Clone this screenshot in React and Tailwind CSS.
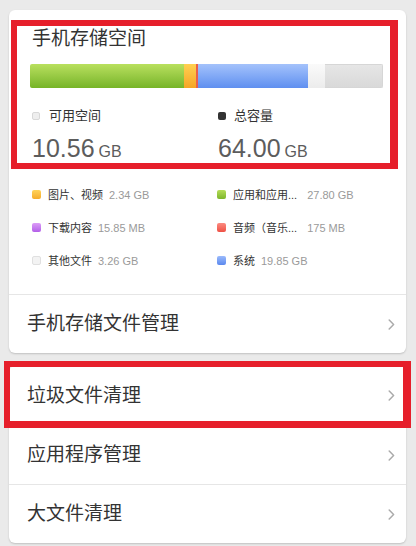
import React from "react";

const FONT = { fontFamily: '"Liberation Sans", "Noto Sans CJK SC", sans-serif' };

function Chevron() {
  return (
    <svg width="7" height="11" viewBox="0 0 7 11" className="shrink-0">
      <polyline points="1.2,1 5.6,5.5 1.2,10" fill="none" stroke="#ababab" strokeWidth="1.5" strokeLinecap="round" strokeLinejoin="round" />
    </svg>
  );
}

function Row({ label, border }) {
  return (
    <div className={`flex h-[59px] items-center justify-between pl-[18px] pr-[11px] ${border ? "border-t border-[#e6e6e6]" : ""}`}>
      <span className="text-[19px] leading-[22px] text-[#333]">{label}</span>
      <Chevron />
    </div>
  );
}

function Legend({ color, label, value, wide }) {
  return (
    <div className="flex h-[33px] items-center">
      <span className={`mr-[7px] h-[9px] w-[9px] shrink-0 rounded-[2px] ${color}`} />
      <span className="text-[11px] leading-[14px] text-[#333]">{label}</span>
      <span className={`${wide ? "ml-[10px]" : "ml-[6px]"} text-[11px] leading-[14px] text-[#9a9a9a]`}>{value}</span>
    </div>
  );
}

export default function App() {
  return (
    <div style={FONT} className="relative h-[546px] w-[416px] overflow-hidden bg-[#eaeaea] px-[9px] pt-[10px]">
      <div className="w-[397px] rounded-[6px] bg-white shadow-[0_1px_2px_rgba(0,0,0,0.18)]">
        <div className="pl-[23px] pr-[23px]">
          <div className="pt-[18px] text-[19px] leading-[22px] text-[#333]">手机存储空间</div>
          <div className="-ml-[2px] mt-[14px] flex h-[24px] w-[353px] overflow-hidden rounded-[2px]">
            <div className="w-[154px] bg-gradient-to-b from-[#b9e05e] to-[#76b426]" />
            <div className="w-[12px] bg-gradient-to-b from-[#ffd050] to-[#f5a524]" />
            <div className="w-[2px] bg-[#e8604a]" />
            <div className="w-[110px] bg-gradient-to-b from-[#a4c2fb] to-[#5f8ff0]" />
            <div className="w-[17px] bg-gradient-to-b from-[#fafafa] to-[#ececec]" />
            <div className="flex-1 border border-l-0 border-[#d6d6d6] bg-gradient-to-b from-[#e6e6e6] to-[#d9d9d9]" />
          </div>
          <div className="mt-[20px] grid grid-cols-[186px_1fr]">
            <div>
              <div className="flex h-[16px] items-center">
                <span className="mr-[9px] h-[8px] w-[8px] rounded-[2px] border border-[#d8d8d8] bg-[#eeeeee]" />
                <span className="text-[13px] leading-[16px] text-[#333]">可用空间</span>
              </div>
              <div className="mt-[10px] h-[28px] leading-[28px] text-[#5c5c5c]">
                <span className="text-[25px]">10.56</span>
                <span className="ml-[4px] text-[16px]">GB</span>
              </div>
            </div>
            <div>
              <div className="flex h-[16px] items-center">
                <span className="mr-[8px] h-[8px] w-[8px] rounded-[2px] bg-[#333]" />
                <span className="text-[13px] leading-[16px] text-[#333]">总容量</span>
              </div>
              <div className="mt-[10px] h-[28px] leading-[28px] text-[#5c5c5c]">
                <span className="text-[25px]">64.00</span>
                <span className="ml-[4px] text-[16px]">GB</span>
              </div>
            </div>
          </div>
          <div className="mt-[16px] grid grid-cols-[185px_1fr] pb-[17px]">
            <Legend color="bg-gradient-to-b from-[#ffd45a] to-[#f5ac2a]" label="图片、视频" value="2.34 GB" />
            <Legend color="bg-gradient-to-b from-[#b6dd58] to-[#7cb52a]" label="应用和应用..." value="27.80 GB" wide />
            <Legend color="bg-gradient-to-b from-[#dc9cf7] to-[#b35ee8]" label="下载内容" value="15.85 MB" />
            <Legend color="bg-gradient-to-b from-[#fb8a80] to-[#ee4f44]" label="音频（音乐..." value="175 MB" wide />
            <Legend color="border border-[#e0e0e0] bg-[#f3f3f3]" label="其他文件" value="3.26 GB" />
            <Legend color="bg-gradient-to-b from-[#9bbafb] to-[#5b88ee]" label="系统" value="19.85 GB" />
          </div>
        </div>
        <Row label="手机存储文件管理" border />
      </div>

      <div className="mt-[13px] w-[397px] rounded-[6px] bg-white shadow-[0_1px_2px_rgba(0,0,0,0.18)]">
        <Row label="垃圾文件清理" />
        <Row label="应用程序管理" border />
        <Row label="大文件清理" border />
      </div>

      <div className="pointer-events-none absolute left-[11px] top-[20px] h-[149px] w-[387px] border-[6px] border-r-[8px] border-[#e61f2b]" />
      <div className="pointer-events-none absolute left-[4px] top-[361px] h-[67px] w-[407px] border-[6px] border-r-[8px] border-b-[7px] border-[#e61f2b]" />
    </div>
  );
}
